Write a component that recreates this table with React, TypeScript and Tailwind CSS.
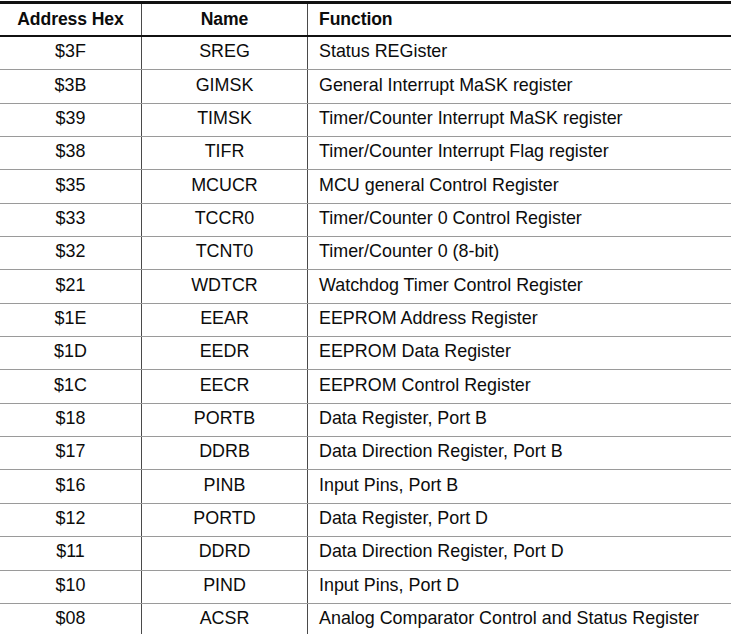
import React from "react";

const rows: [string, string, string][] = [
  ["$3F", "SREG", "Status REGister"],
  ["$3B", "GIMSK", "General Interrupt MaSK register"],
  ["$39", "TIMSK", "Timer/Counter Interrupt MaSK register"],
  ["$38", "TIFR", "Timer/Counter Interrupt Flag register"],
  ["$35", "MCUCR", "MCU general Control Register"],
  ["$33", "TCCR0", "Timer/Counter 0 Control Register"],
  ["$32", "TCNT0", "Timer/Counter 0 (8-bit)"],
  ["$21", "WDTCR", "Watchdog Timer Control Register"],
  ["$1E", "EEAR", "EEPROM Address Register"],
  ["$1D", "EEDR", "EEPROM Data Register"],
  ["$1C", "EECR", "EEPROM Control Register"],
  ["$18", "PORTB", "Data Register, Port B"],
  ["$17", "DDRB", "Data Direction Register, Port B"],
  ["$16", "PINB", "Input Pins, Port B"],
  ["$12", "PORTD", "Data Register, Port D"],
  ["$11", "DDRD", "Data Direction Register, Port D"],
  ["$10", "PIND", "Input Pins, Port D"],
  ["$08", "ACSR", "Analog Comparator Control and Status Register"],
];

export default function App() {
  return (
    <div
      className="w-[731px] h-[634px] overflow-hidden bg-white text-[#0c0c0c] pt-px"
      style={{ fontFamily: '"Liberation Sans", Arial, sans-serif' }}
    >
      <div className="border-t-[3px] border-[#111]">
        <div className="grid grid-cols-[141px_166px_1fr] h-[33px] border-b-2 border-[#111] text-[17.6px] font-bold tracking-[-0.1px]">
          <div className="flex items-center justify-center pb-px">Address Hex</div>
          <div className="flex items-center justify-center border-l border-[#4a4a4a] pb-px">Name</div>
          <div className="flex items-center pl-[11px] border-l border-[#4a4a4a] pb-px">Function</div>
        </div>
        {rows.map(([a, n, f], i) => (
          <div
            key={i}
            className="grid grid-cols-[141px_166px_1fr] h-[33.35px] border-b border-[#9a9a9a] text-[17.9px]"
          >
            <div className="flex items-center justify-center pb-[3px]">{a}</div>
            <div className="flex items-center justify-center border-l border-[#4a4a4a] pb-[3px]">{n}</div>
            <div className="flex items-center pl-[11px] border-l border-[#4a4a4a] whitespace-nowrap pb-[3px]">{f}</div>
          </div>
        ))}
      </div>
    </div>
  );
}
